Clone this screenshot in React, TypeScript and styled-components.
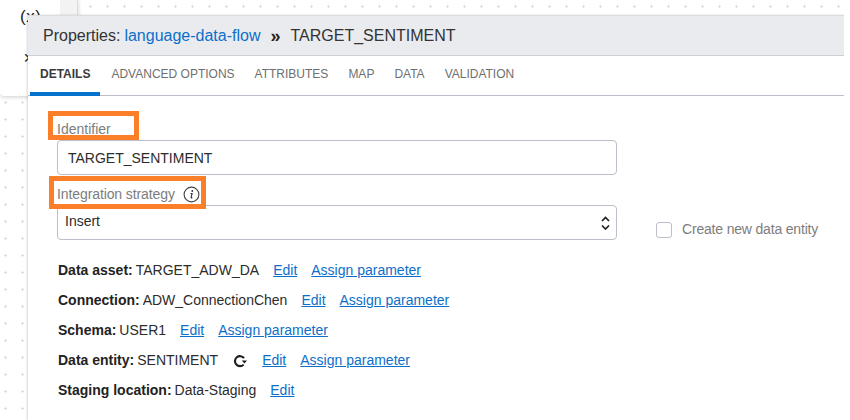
import { FC } from "react";
import styled, { createGlobalStyle } from "styled-components";

const GlobalStyle = createGlobalStyle`
  html, body {
    margin: 0;
    padding: 0;
    background: #fff;
  }
  body {
    font-family: "Liberation Sans", Arial, sans-serif;
    color: #2c2c2c;
  }
`;

const dots = `radial-gradient(circle at 1.5px 1.5px, #dedede 1.2px, transparent 1.4px)`;

const Page = styled.div`
  position: relative;
  width: 844px;
  height: 420px;
  overflow: hidden;
  background-color: #fff;
  background-image: ${dots};
  background-size: 17px 17px;
  background-position: 4px 16px;
`;

const TopStrip = styled.div`
  height: 15px;
  background-color: #fff;
  background-image: ${dots};
  background-size: 17px 17px;
  background-position: 4px 5px;
`;

const Toolbar = styled.div`
  position: absolute;
  left: 0;
  top: 0;
  width: 77px;
  height: 96px;
  display: grid;
  grid-template-columns: 60px 17px;
  border-right: 1px solid #dcdcdc;
  border-bottom-left-radius: 4px;
  box-shadow: 0 1px 4px rgba(0, 0, 0, 0.2);
  background: #fff;
`;

const ToolColumn = styled.div`
  padding: 8px 0 0 20px;
  font-size: 17px;
  line-height: 17px;
  letter-spacing: 0.5px;
  color: #222;
`;

const ToolGutter = styled.div`
  background: #f3f3f3;
`;

const ToolGlyph = styled.div`
  margin-top: 26px;
  margin-left: 3px;
  font-size: 14px;
  line-height: 14px;
`;

const Panel = styled.section`
  position: absolute;
  left: 28px;
  top: 15px;
  right: 0;
  bottom: 0;
  display: flex;
  flex-direction: column;
  background: #fff;
  box-shadow: -1px 0 2px rgba(0, 0, 0, 0.16);
`;

const Header = styled.header`
  height: 39px;
  display: flex;
  align-items: center;
  padding-left: 15px;
  font-size: 16px;
  background: #e9ebef;
  border-top: 1px solid #dcdcdc;
  border-bottom: 1px solid #cfd0d2;
  color: #333;
`;

const HeaderLink = styled.a`
  margin-left: 4px;
  color: #0d6fc9;
`;

const Crumb = styled.span`
  margin: 0 10px;
  font-weight: bold;
  font-size: 18px;
  line-height: 16px;
  color: #222;
`;

const Tabs = styled.nav`
  height: 39px;
  display: flex;
  align-items: stretch;
  padding-left: 2px;
  border-bottom: 1px solid #bcbfca;
`;

const Tab = styled.div<{ $active?: boolean }>`
  display: flex;
  align-items: center;
  padding: 0 10px;
  margin-bottom: -1px;
  margin-right: ${(p) => (p.$active ? "1px" : "0")};
  font-size: 12px;
  font-weight: ${(p) => (p.$active ? "bold" : "normal")};
  color: ${(p) => (p.$active ? "#3a3a3a" : "#6f6f6f")};
  border-bottom: 4px solid ${(p) => (p.$active ? "#0572ce" : "transparent")};
`;

const Body = styled.div`
  position: relative;
  flex: 1;
  padding: 25px 0 0 29px;
`;

const FieldLabel = styled.div<{ $tight?: boolean }>`
  box-sizing: border-box;
  display: flex;
  align-items: center;
  height: 19px;
  padding-bottom: 3px;
  font-size: 14px;
  letter-spacing: ${(p) => (p.$tight ? "-0.1px" : "0")};
  color: #7d7d7d;
`;

const InfoIcon = styled.svg`
  margin-left: 8px;
  flex: none;
`;

const Box = styled.div`
  position: relative;
  box-sizing: border-box;
  width: 560px;
  height: 35px;
  margin-bottom: 11px;
  display: flex;
  align-items: center;
  border: 1px solid #bcbfca;
  border-radius: 4px;
  font-size: 14px;
  color: #2c2c2c;
`;

const InputBox = styled(Box)`
  padding-left: 10px;
`;

const SelectBox = styled(Box)`
  justify-content: space-between;
  padding: 0 6px 3px 7px;
  margin-bottom: 0;
`;

const SelectCaret = styled.svg`
  margin-top: 3px;
`;

const Highlight = styled.div<{ $left: number; $top: number; $w: number; $h: number }>`
  position: absolute;
  box-sizing: border-box;
  left: ${(p) => p.$left}px;
  top: ${(p) => p.$top}px;
  width: ${(p) => p.$w}px;
  height: ${(p) => p.$h}px;
  border: 5px solid #fb7f28;
  pointer-events: none;
`;

const CreateOption = styled.label`
  position: absolute;
  left: 628px;
  top: 126px;
  display: flex;
  align-items: center;
  gap: 10px;
  font-size: 14px;
  letter-spacing: -0.18px;
  color: #7d7d7d;
`;

const CreateText = styled.span`
  margin-top: -2px;
`;

const CheckBox = styled.span`
  box-sizing: border-box;
  width: 16px;
  height: 16px;
  border: 1px solid #bcbfca;
  border-radius: 3px;
`;

const Rows = styled.div`
  margin-top: 15px;
  margin-left: 1px;
`;

const Row = styled.div`
  display: flex;
  align-items: center;
  height: 30px;
  font-size: 14px;
  color: #2c2c2c;
`;

const Name = styled.b`
  margin-right: 3px;
  color: #222;
`;

const RowLink = styled.a`
  margin-left: 14px;
  color: #0d6fc9;
  text-decoration: underline;
`;

const RefreshIcon = styled.svg`
  margin: 2px 1px 0 15px;
`;

const details = [
  { name: "Data asset:", value: "TARGET_ADW_DA", param: true },
  { name: "Connection:", value: "ADW_ConnectionChen", param: true },
  { name: "Schema:", value: "USER1", param: true },
  { name: "Data entity:", value: "SENTIMENT", param: true, refresh: true },
  { name: "Staging location:", value: "Data-Staging", param: false },
];

const App: FC = () => (
  <>
    <GlobalStyle />
    <Page>
      <TopStrip />
      <Toolbar>
        <ToolColumn>
          (x)
          <ToolGlyph>✕</ToolGlyph>
        </ToolColumn>
        <ToolGutter />
      </Toolbar>
      <Panel>
        <Header>
          Properties:
          <HeaderLink>language-data-flow</HeaderLink>
          <Crumb>»</Crumb>
          TARGET_SENTIMENT
        </Header>
        <Tabs>
          <Tab $active>DETAILS</Tab>
          <Tab>ADVANCED OPTIONS</Tab>
          <Tab>ATTRIBUTES</Tab>
          <Tab>MAP</Tab>
          <Tab>DATA</Tab>
          <Tab>VALIDATION</Tab>
        </Tabs>
        <Body>
          <FieldLabel>Identifier</FieldLabel>
          <InputBox>TARGET_SENTIMENT</InputBox>
          <FieldLabel $tight>
            Integration strategy
            <InfoIcon width="17" height="17" viewBox="0 0 17 17" fill="none">
              <circle cx="8.5" cy="8.5" r="7.4" stroke="#444" strokeWidth="1.1" />
              <circle cx="9.3" cy="5" r="0.9" fill="#333" />
              <path d="M7.6 7.6h1.5l-1 3.8c-.1.6.4.7 1.2.1" stroke="#333" strokeWidth="1.1" />
            </InfoIcon>
          </FieldLabel>
          <SelectBox>
            Insert
            <SelectCaret width="9" height="14" viewBox="0 0 9 14" fill="none" stroke="#222" strokeWidth="1.7">
              <path d="M1 5 4.5 1.5 8 5" />
              <path d="M1 9.5 4.5 13 8 9.5" />
            </SelectCaret>
          </SelectBox>
          <CreateOption>
            <CheckBox />
            <CreateText>Create new data entity</CreateText>
          </CreateOption>
          <Rows>
            {details.map((d) => (
              <Row key={d.name}>
                <Name>{d.name}</Name>
                {d.value}
                {d.refresh && (
                  <RefreshIcon width="14" height="14" viewBox="0 0 14 14" fill="none">
                    <path d="M10.6 10.6A5 5 0 1 1 11 4.2" stroke="#1c1c1c" strokeWidth="2.1" />
                    <path d="M8.8 6.4h5.2l-2.6 3z" fill="#1c1c1c" />
                  </RefreshIcon>
                )}
                <RowLink>Edit</RowLink>
                {d.param && <RowLink>Assign parameter</RowLink>}
              </Row>
            ))}
          </Rows>
          <Highlight $left={20} $top={15} $w={91} $h={29} />
          <Highlight $left={21} $top={80} $w={157} $h={33} />
        </Body>
      </Panel>
    </Page>
  </>
);

export default App;
